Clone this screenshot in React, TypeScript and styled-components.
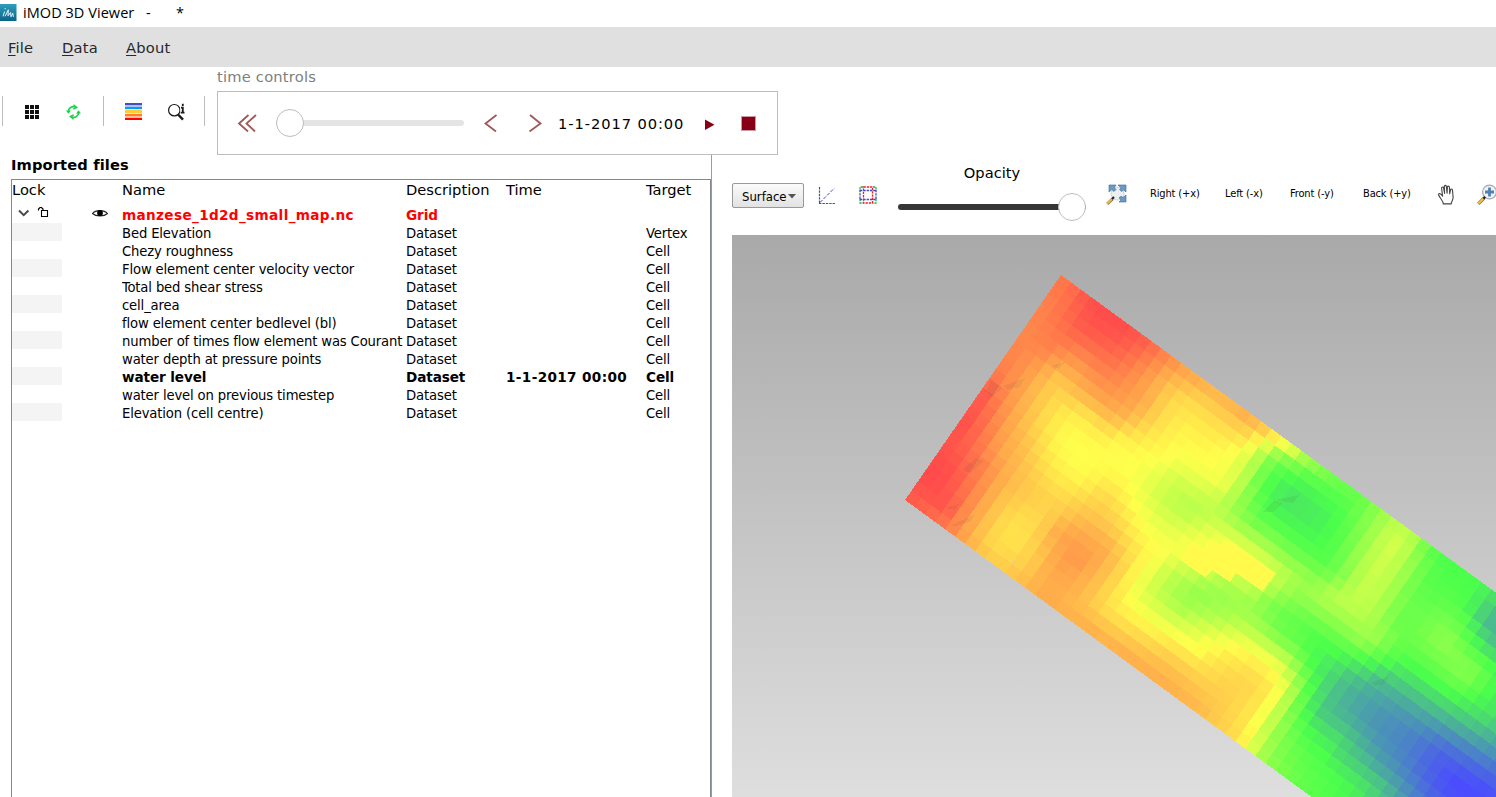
import React from "react";
import styled, { createGlobalStyle } from "styled-components";

const GlobalStyle = createGlobalStyle`
  html, body { margin: 0; padding: 0; background: #fff; }
  body { overflow: hidden; }
  * { box-sizing: border-box; }
`;

const wide = `"DejaVu Sans", Verdana, sans-serif`;
const narrow = `"DejaVu Sans Condensed", "DejaVu Sans", Tahoma, sans-serif`;

const Window = styled.div`
  width: 1496px;
  height: 797px;
  display: flex;
  flex-direction: column;
  overflow: hidden;
  background: #fff;
  color: #000;
  font-family: ${wide};
`;

const TitleBar = styled.header`
  height: 27px;
  flex: none;
  display: flex;
  align-items: flex-start;
  font: 14.5px/26px "Open Sans", "Noto Sans", sans-serif;
  white-space: pre;
`;

const AppIcon = styled.svg`
  margin: 4px 6px 0 0;
  flex: none;
`;

const TitleText = styled.span<{ $w: number }>`
  width: ${(p) => p.$w}px;
  letter-spacing: 0.05px;
`;

const MenuBar = styled.nav`
  height: 40px;
  flex: none;
  display: flex;
  padding-left: 8px;
  background: #e0e0e0;
  color: #26282a;
  font-size: 14.67px;
  letter-spacing: 0.2px;
  line-height: 41px;
`;

const MenuItem = styled.div<{ $w: number }>`
  width: ${(p) => p.$w}px;
  &::first-letter {
    text-decoration: underline;
    text-underline-offset: 2px;
  }
`;

const ToolRow = styled.div`
  height: 88px;
  flex: none;
  display: flex;
`;

const IconBar = styled.div`
  width: 217px;
  height: 30px;
  margin-top: 29px;
  display: flex;
  align-items: center;
  padding-left: 2px;
`;

const Separator = styled.i`
  width: 1px;
  height: 30px;
  background: #bdbdbd;
`;

const IconSlot = styled.span<{ $w: number; $pad: number }>`
  width: ${(p) => p.$w}px;
  padding: 2px 0 0 ${(p) => p.$pad}px;
  display: flex;
  svg { display: block; flex: none; }
`;

const TimeGroup = styled.div`
  width: 561px;
  display: flex;
  flex-direction: column;
  color: #7d7e7f;
  font-size: 14.67px;
`;

const GroupLabel = styled.span`
  height: 24px;
  line-height: 20px;
  letter-spacing: 0.22px;
`;

const TimeBox = styled.div`
  height: 64px;
  border: 1px solid #bdbdbd;
  display: flex;
  align-items: center;
  padding-left: 19px;
  background: #fff;
  svg { display: block; flex: none; }
`;

const Slider = styled.div<{ $w: number }>`
  position: relative;
  width: ${(p) => p.$w}px;
  height: 28px;
  flex: none;
  display: flex;
  align-items: center;
`;

const Track = styled.i<{ $color: string }>`
  width: 100%;
  height: 6px;
  border-radius: 3px;
  background: ${(p) => p.$color};
`;

const Handle = styled.i<{ $side: "left" | "right" }>`
  position: absolute;
  ${(p) => p.$side}: 0;
  top: 0;
  width: 28px;
  height: 28px;
  border: 1px solid #bdbdbd;
  border-radius: 50%;
  background: #fff;
`;

const TimeText = styled.span`
  width: 147px;
  flex: none;
  color: #000;
  font-size: 14.67px;
  letter-spacing: 0.92px;
  white-space: nowrap;
`;

const Split = styled.main`
  flex: 1;
  min-height: 0;
  display: flex;
`;

const FilesPane = styled.section`
  width: 712px;
  border-right: 1px solid #9c9c9c;
  padding-left: 11px;
  display: flex;
  flex-direction: column;
`;

const PaneTitle = styled.h2`
  margin: 0;
  height: 24px;
  font: bold 14.67px/20px ${wide};
  letter-spacing: 0.12px;
`;

const Table = styled.div`
  flex: 1;
  border: 1px solid #828790;
  border-bottom: 0;
`;

const Columns = styled.div`
  display: grid;
  grid-template-columns: 80px 30px 284px 100px 140px 1fr;
  white-space: nowrap;
`;

const HeaderRow = styled(Columns)`
  height: 26px;
  font-size: 14.67px;
  line-height: 20px;
`;

const Row = styled(Columns)<{ $bold?: boolean; $red?: boolean }>`
  height: 18px;
  font-family: ${(p) => (p.$bold ? wide : narrow)};
  font-size: ${(p) => (p.$bold ? "13.6px" : "14.67px")};
  font-weight: ${(p) => (p.$bold ? "bold" : "normal")};
  letter-spacing: ${(p) => (p.$bold ? "-0.1px" : "-0.14px")};
  color: ${(p) => (p.$red ? "#ff0000" : "#000")};
  line-height: ${(p) => (p.$bold && !p.$red ? "20px" : "19px")};
`;

const FileRow = styled(Row)`
  height: 17px;
`;

const Cell = styled.span<{ $spaced?: boolean }>`
  overflow: hidden;
  ${(p) => p.$spaced && "letter-spacing: 0.36px;"}
`;

const LockCell = styled.span<{ $shade?: boolean }>`
  width: 50px;
  height: 18px;
  display: flex;
  background: ${(p) => (p.$shade ? "#f4f4f4" : "transparent")};
`;

const ViewPane = styled.section`
  flex: 1;
  min-width: 0;
  padding-left: 20px;
  display: flex;
  flex-direction: column;
`;

const ViewBar = styled.div`
  height: 80px;
  flex: none;
  display: flex;
  align-items: flex-start;
  padding-top: 28px;
  svg { display: block; flex: none; }
`;

const Dropdown = styled.button`
  width: 72px;
  height: 25px;
  flex: none;
  display: flex;
  align-items: center;
  gap: 1px;
  padding: 1px 0 0 9px;
  border: 1px solid #999;
  border-radius: 2px;
  background: linear-gradient(#fbfbfb, #e2e2e2);
  color: #000;
  font: 13px ${narrow};
`;

const BarSlot = styled.span<{ $w: number; $pad?: number; $top?: number }>`
  width: ${(p) => p.$w}px;
  padding: ${(p) => p.$top ?? 0}px 0 0 ${(p) => p.$pad ?? 0}px;
  flex: none;
`;

const OpacityBlock = styled.div`
  width: 188px;
  height: 60px;
  margin: -21px 20px 0 12px;
  flex: none;
  display: flex;
  flex-direction: column;
  align-items: center;
  font-size: 14.67px;
  line-height: 21px;
  gap: 10px;
`;

const OpacityLabel = styled.span`
  height: 21px;
`;

const ViewLink = styled.span<{ $w: number }>`
  width: ${(p) => p.$w}px;
  flex: none;
  font: 11px/22px ${narrow};
  letter-spacing: -0.14px;
  white-space: nowrap;
`;

const Scene = styled.div`
  flex: 1;
  min-height: 0;
  background: linear-gradient(#a9a9a9, #dedede);
  svg { display: block; }
`;

/* ---------- water level surface ---------- */

// Samples of the surface as x, y, level; 0 red, 1 yellow, 2 green, 3 blue.
const samples: number[] = [
  1061,275,.25, 1073,285,.2, 1087,297,.05, 1107,313,0, 1127,328,.02, 1147,343,.12, 1170,357,.35, 1197,375,.5,
  1027,327,.35, 1047,303,.3, 1007,350,.32, 992,380,.2, 983,393,.05, 963,420,0, 947,443,.05, 930,470,0,
  907,499,.1, 937,483,0, 943,507,.05, 930,515,.2, 950,527,.3, 953,510,.15, 963,517,.4, 973,547,.6,
  980,523,.6, 993,543,.8, 1017,540,.85, 1013,570,.7, 1033,563,.72, 970,467,.2, 957,467,.05, 987,467,.35,
  1000,447,.5, 980,433,.2, 1007,393,.4, 1020,360,.35, 1047,350,.3, 1057,363,.5, 1070,337,.2, 1083,327,.08,
  1067,310,.2, 1110,343,.1, 1113,373,.3, 1120,393,.42, 1100,370,.3, 1080,360,.4, 1057,380,.7, 1080,393,.6,
  1097,403,.55, 1060,400,.8, 1037,423,.75, 1023,400,.55, 1030,377,.5, 1007,427,.5, 1063,427,.95, 1080,447,1,
  1093,460,1, 1057,450,.95, 1110,420,.65, 1087,413,.85, 1127,413,.55, 1133,427,.75, 1120,440,.95, 1147,400,.55,
  1140,373,.4, 1167,380,.6, 1173,400,.8, 1197,403,.8, 1160,427,.85, 1187,427,.92, 1163,460,1, 1140,460,1,
  1190,453,1, 1080,480,.95, 1113,473,.97, 1020,440,.6, 1033,460,.72, 1053,477,.85, 1013,473,.6, 1003,500,.68,
  1030,493,.7, 1057,503,.75, 1007,520,.8, 1037,523,.8, 1060,513,.72, 1060,533,.5, 1077,560,.42, 1087,547,.5,
  1107,550,.55, 1040,560,.65, 1047,570,.55, 1087,513,.68, 1107,493,.8, 1113,520,.75, 1130,537,.85, 1133,507,.97,
  1153,480,1.15, 1163,500,1.3, 1187,507,1.4, 1180,477,1.25, 1157,530,1.1, 1143,517,1.02, 1163,553,1, 1140,553,.9,
  1157,573,1.15, 1173,570,1.35, 1207,383,.55, 1247,417,.55, 1270,430,.68, 1290,447,.95, 1303,455,1.4, 1320,467,1.6,
  1197,407,.8, 1230,427,.8, 1220,450,.98, 1243,447,.95, 1200,463,1, 1190,477,1.15, 1223,483,1.05, 1220,497,1.3,
  1197,513,1.4, 1233,503,1.5, 1247,477,1.4, 1263,457,1.5, 1260,480,1.85, 1280,457,1.75, 1280,477,2, 1273,507,2.05,
  1290,493,2.12, 1320,517,2.08, 1313,530,2.05, 1323,560,1.95, 1323,577,1.75, 1293,550,1.85, 1257,523,1.8, 1240,520,1.6,
  1307,477,1.95, 1333,497,1.95, 1347,513,1.95, 1337,480,1.8, 1367,497,1.8, 1360,520,1.75, 1347,540,1.85, 1340,573,1.75,
  1360,560,1.5, 1370,527,1.6, 1380,547,1.35, 1393,527,1.35, 1410,540,1.35, 1393,547,1.2, 1380,570,1.25, 1370,593,1.3,
  1343,600,1.35, 1363,613,1.4, 1323,593,1.4, 1297,573,1.5, 1270,553,1.45, 1240,537,1.3, 1213,533,1.15, 1193,537,1.1,
  1230,547,1, 1207,560,1, 1247,560,1, 1263,577,1, 1283,577,1.4, 1187,553,1, 1193,573,1.3, 1213,577,1.4,
  1233,583,1.45, 1263,597,1.6, 1200,597,1.6, 1223,600,1.55, 1180,593,1.5, 1190,620,1.3, 1230,613,1.5, 1203,637,1.05,
  1220,627,1.3, 1253,633,1.35, 1233,643,1, 1280,613,1.85, 1280,637,1.75, 1307,620,1.85, 1313,640,2, 1293,647,1.75,
  1280,660,1.2, 1260,660,.95, 1240,680,.78, 1213,657,.9, 1187,647,.95, 1213,687,.75, 1187,680,.65, 1193,703,.6,
  1230,713,.78, 1240,740,.85, 1267,700,.92, 1257,730,1.05, 1280,687,1, 1293,680,1.4, 1283,703,1.35, 1270,733,1.5,
  1267,757,1.6, 1283,770,1.75, 1307,790,1.9, 1297,747,1.85, 1297,710,1.85, 1310,690,2, 1313,667,2.03, 1307,730,2,
  1323,757,1.98, 1323,713,2.3, 1330,670,2.15, 1347,680,2.35, 1327,647,2, 1337,627,1.7, 1360,640,1.6, 1353,653,1.95,
  1377,640,1.55, 1380,613,1.5, 1397,587,1.55, 1413,560,1.6, 1427,547,1.85, 1447,557,2, 1433,580,1.95, 1413,593,1.85,
  1397,620,1.85, 1393,643,1.8, 1377,667,2.1, 1380,680,2.35, 1393,667,2.1, 1413,660,1.95, 1427,633,1.75, 1447,643,1.6,
  1467,673,1.65, 1440,627,1.7, 1433,663,1.85, 1453,690,1.95, 1483,700,2.05, 1480,667,1.8, 1493,683,2, 1463,620,1.9,
  1473,580,2, 1457,593,1.95, 1480,613,2.25, 1493,607,2.3, 1490,627,2.4, 1493,647,2.3, 1473,647,1.95, 1490,597,2.1,
  1413,680,2.15, 1440,700,2.2, 1467,720,2.3, 1493,740,2.45, 1493,717,2.15, 1407,697,2.4, 1440,723,2.5, 1467,743,2.6,
  1493,767,2.75, 1380,700,2.5, 1393,717,2.6, 1420,730,2.65, 1440,750,2.85, 1467,760,2.8, 1453,780,3, 1480,790,3,
  1493,794,2.95, 1360,693,2.45, 1367,713,2.55, 1350,733,2.35, 1380,740,2.6, 1407,753,2.7, 1427,770,2.85, 1380,767,2.5,
  1413,787,2.7, 1337,740,2.15, 1340,757,2.2, 1360,763,2.3, 1353,787,2.05, 1380,787,2.3, 1333,773,2, 1327,793,1.97,
  1037,593,.55, 1073,603,.62, 1100,597,.75, 1123,573,.8, 1127,593,.95, 1137,593,1.1, 1157,583,1.3, 1190,590,1.55,
  1183,613,1.45, 1157,603,1.25, 1137,610,1, 1170,633,1, 1197,653,.97, 1197,640,1.15, 1110,610,.85, 1090,630,.55,
  1123,653,.55, 1157,680,.55, 1170,657,.72, 1130,630,.8, 1190,680,.72, 1197,710,.62, 1057,600,.55,
];

const ORIGIN = [1061, 275];
const U = [0.8075, 0.5898];
const V = [-0.5693, 0.8212];
const CELL_U = 12.4;
const CELL_V = 274 / 24;

// Radial basis interpolation with a linear kernel, solved by Gaussian elimination.
function fitSurface(data: number[]) {
  const n = data.length / 3;
  const dist = (ax: number, ay: number, bx: number, by: number) =>
    Math.sqrt((ax - bx) ** 2 + (ay - by) ** 2 + 9);
  const m: number[][] = [];
  for (let i = 0; i < n; i++) {
    const row: number[] = [];
    for (let j = 0; j < n; j++) {
      row.push(dist(data[i * 3], data[i * 3 + 1], data[j * 3], data[j * 3 + 1]) - (i === j ? 4 : 0));
    }
    row.push(data[i * 3 + 2]);
    m.push(row);
  }
  for (let c = 0; c < n; c++) {
    let best = c;
    for (let r = c + 1; r < n; r++) if (Math.abs(m[r][c]) > Math.abs(m[best][c])) best = r;
    [m[c], m[best]] = [m[best], m[c]];
    for (let r = c + 1; r < n; r++) {
      const f = m[r][c] / m[c][c];
      if (f === 0) continue;
      for (let k = c; k <= n; k++) m[r][k] -= f * m[c][k];
    }
  }
  const w: number[] = new Array(n).fill(0);
  for (let r = n - 1; r >= 0; r--) {
    let s = m[r][n];
    for (let k = r + 1; k < n; k++) s -= m[r][k] * w[k];
    w[r] = s / m[r][r];
  }
  return (x: number, y: number) => {
    let s = 0;
    for (let i = 0; i < n; i++) s += w[i] * dist(x, y, data[i * 3], data[i * 3 + 1]);
    return s;
  };
}

const stops = [
  [255, 75, 75],
  [255, 255, 75],
  [75, 255, 75],
  [75, 75, 255],
];

function levelColor(level: number) {
  const t = Math.max(0, Math.min(2.999, level));
  const k = Math.floor(t);
  const f = t - k;
  const c = stops[k].map((v, i) => Math.round(v + (stops[k + 1][i] - v) * f));
  return `rgb(${c.join(",")})`;
}

function buildCells() {
  const level = fitSurface(samples);
  const at = (i: number, j: number) => [
    ORIGIN[0] + i * CELL_U * U[0] + j * CELL_V * V[0],
    ORIGIN[1] + i * CELL_U * U[1] + j * CELL_V * V[1],
  ];
  const cells: { points: string; fill: string }[] = [];
  for (let j = 0; j < 24; j++) {
    for (let i = 0; i < 58; i++) {
      const [cx, cy] = at(i + 0.5, j + 0.5);
      if (cx > 1506 || cy > 808) continue;
      const corners = [at(i, j), at(i + 1, j), at(i + 1, j + 1), at(i, j + 1)];
      cells.push({
        points: corners.map((p) => `${p[0].toFixed(2)},${p[1].toFixed(2)}`).join(" "),
        fill: levelColor(level(cx, cy)),
      });
    }
  }
  return cells;
}

const cells = buildCells();

const Surface = () => (
  <svg width="764" height="562" viewBox="732 235 764 562" shapeRendering="crispEdges">
    {cells.map((c, i) => (
      <polygon key={i} points={c.points} fill={c.fill} />
    ))}
    <polygon
      points="1192,542 1205,550 1212,539 1222,546 1231,542 1275,573 1262,591 1236,573 1230,582 1212,570 1205,577 1180,560"
      fill="#fffa4b"
    />
    <g fill="#404040" fillOpacity="0.08">
      <path d="M991 380l12 8-11 9-6-5zM1003 386l22-8-5 9-13 3zM1051 366l14-4-6 7zM962 470l14-12 8 3-14 12zM950 526l25-12-5 8-14 4zM945 508l14-4-4 6zM1262 512l12-12 8 3-9 9zM1275 500l24-5-6 8zM1371 683l18-7-5 8-10 2z" />
    </g>
  </svg>
);

/* ---------- icons ---------- */

const LogoIcon = () => (
  <AppIcon width="17" height="17" viewBox="0 0 17 17">
    <defs>
      <linearGradient id="logo" x1="0" y1="0" x2="0" y2="1">
        <stop offset="0" stopColor="#2e9fbd" />
        <stop offset="1" stopColor="#0b6488" />
      </linearGradient>
    </defs>
    <rect width="16.5" height="17" fill="url(#logo)" />
    <path d="M3 12.300L4.600 7.500M5.200 4v1.200M5 12.300l3.300-6.500-.3 6 2.600-3.300.4 4.300 1.800-3.600.6 3.600" fill="none" stroke="#e8f6fa" strokeWidth="1" />
  </AppIcon>
);

const GridIcon = () => (
  <svg width="14" height="14" viewBox="0 0 14 14" fill="#111">
    {[0, 5, 10].map((y) => [0, 5, 10].map((x) => <rect key={`${x}-${y}`} x={x} y={y} width="4" height="4" />))}
  </svg>
);

const RefreshIcon = () => (
  <svg width="15" height="16" viewBox="0 0 15 16" fill="none" stroke="#1bd24b" strokeWidth="1.7">
    <path d="M2.3 7.2C2.6 3.8 6.3 1.2 10.3 3.4M12.7 8.8C12.4 12.2 8.7 14.8 4.7 12.6" />
    <path d="M0 6.5h5L2.4 9.8zM10 9.5h5L12.6 6.2z" fill="#1bd24b" stroke="none" />
    <path d="M7.5 0.8L10.8 3.6 7.2 5.2M7.5 15.2L4.2 12.4 7.8 10.8" strokeWidth="1.3" />
  </svg>
);

const LegendIcon = () => (
  <svg width="18" height="18" viewBox="0 0 18 18" shapeRendering="crispEdges">
    <rect width="17" height="2" y="0" fill="#464bc8" />
    <rect width="17" height="2" y="2" fill="#a9c4f5" />
    <rect width="17" height="2" y="4" fill="#00a2f0" />
    <rect width="17" height="1" y="6" fill="#d5ecf3" />
    <rect width="17" height="3" y="7" fill="#ffca3c" />
    <rect width="17" height="1" y="10" fill="#ffe6c4" />
    <rect width="17" height="2" y="11" fill="#ff7f27" />
    <rect width="17" height="2" y="13" fill="#ffc09c" />
    <rect width="17" height="2" y="15" fill="#ff0000" />
  </svg>
);

const InspectIcon = () => (
  <svg width="18" height="18" viewBox="0 0 18 18" fill="none" stroke="#1a1a1a">
    <circle cx="7.300" cy="7.200" r="5.700" strokeWidth="1.200" />
    <path d="M11 11.500l5 5.200" strokeWidth="2.400" />
    <path d="M15.500 .5v10" stroke="#fff" strokeWidth="4.500" />
    <path d="M15.800 .8v2.200M14 4.700h1.800v4.600M13.700 9.600h3.800" strokeWidth="1.800" />
  </svg>
);

const Chevron = ({ d, w }: { d: string; w: number }) => (
  <svg width={w} height="18" viewBox={`0 0 ${w} 18`} fill="none" stroke="#a05858" strokeWidth="1.8">
    <path d={d} />
  </svg>
);

const AxesIcon = () => (
  <svg width="18" height="19" viewBox="0 0 18 19" fill="none" stroke="#3f48cc">
    <path d="M1.5 1v16.5M1 17.5h17" strokeWidth="1.2" strokeDasharray="2.4 1" />
    <path d="M2 16.5L16.5 2" strokeDasharray="3.5 1.5" />
  </svg>
);

const BoundsIcon = () => (
  <svg width="18" height="18" viewBox="0 0 18 18" fill="none" strokeWidth="1.3" strokeDasharray="2.3 1">
    <path d="M4 1H1v4M14 1h3v4M1 13v4h3M17 13v4h-3" stroke="#22b14c" />
    <path d="M1 4.5h16M1 13.5h16M1 4v10M17 4v10" stroke="#3f48cc" />
    <path d="M4.5 1h9v16h-9z" stroke="#ed1c24" />
  </svg>
);

const FitIcon = () => (
  <svg width="21" height="21" viewBox="0 0 21 21">
    <circle cx="11.500" cy="9.500" r="6.500" fill="#eceeef" stroke="#cfd3d5" />
    <path d="M3 1h7L8.300 3.500 10 5.500 8 7.500 5.700 5.600 3 8zM12 1h8v7l-2.500-2-2 1.500L13.500 5.500l1.600-1.700zM20 11v7h-7l2-2-2-2.200 2-1.500 2 1.300z" fill="#6c9ac8" stroke="#42698f" strokeWidth=".6" />
    <path d="M1.200 19.800l5.500-5" stroke="#8a7650" strokeWidth="3" />
    <path d="M1.200 19.600l4.800-4.400" stroke="#f5c23a" strokeWidth="1.800" />
    <path d="M6 15l2-2" stroke="#222" strokeWidth="2.200" />
  </svg>
);

const HandIcon = () => (
  <svg width="18" height="21" viewBox="0 0 18 21" fill="#fff" stroke="#444" strokeWidth="1.100" strokeLinejoin="round">
    <path d="M5.700 19.900c0-3.200-3.800-6-4.800-9.400-.1-1.300 1.500-1.300 2.400-.3l1.700 2-1-8.200c0-1.300 1.700-1.400 2-.1l1 5.600-.3-7.200c0-1.300 1.800-1.300 2 0l.8 7 .3-6.300c.2-1.200 1.800-1.100 2 .1l.3 6.700.8-4c.4-1.200 2-.9 2 .3l.6 7.200c.1 2.600-1.700 4.200-1.900 6.600z" transform="translate(.6)" />
  </svg>
);

const ZoomInIcon = () => (
  <svg width="21" height="21" viewBox="0 0 21 21">
    <circle cx="12.500" cy="8" r="6.900" fill="#f0f2f4" stroke="#a6a9ab" strokeWidth="1.200" />
    <path d="M12.500 3.500v9M8 8h9" stroke="#4f81b5" strokeWidth="2.800" />
    <path d="M1.200 19.800l6-5.800" stroke="#8a7650" strokeWidth="3.200" />
    <path d="M1.200 19.600l5-4.800" stroke="#f5c23a" strokeWidth="1.900" />
    <path d="M6.500 14.500l1.700-1.700" stroke="#222" strokeWidth="2.400" />
  </svg>
);

const TreeIcons = () => (
  <svg width="50" height="17" viewBox="12 206 50 17" fill="none">
    <path d="M19 210.500l4.700 4.700 4.700-4.700" stroke="#484b4d" strokeWidth="2" />
    <path d="M41.500 210.500h6v6h-6z" stroke="#000" strokeWidth="1.100" />
    <path d="M38.500 210.500v-1.500l1.500-1.500h1.500l1.500 1.500v1.500" stroke="#000" strokeWidth="1.200" />
  </svg>
);

const EyeIcon = () => (
  <svg width="16" height="14" viewBox="0 0 16 14">
    <path d="M.5 7.500C3.500 3.600 12 3.600 15.500 7.500 12 10.700 4 10.700.5 7.500z" fill="#fff" stroke="#222" strokeWidth="1.100" />
    <circle cx="8" cy="7" r="2.900" fill="#000" />
  </svg>
);

const datasets = [
  { name: "Bed Elevation", target: "Vertex" },
  { name: "Chezy roughness", target: "Cell" },
  { name: "Flow element center velocity vector", target: "Cell" },
  { name: "Total bed shear stress", target: "Cell" },
  { name: "cell_area", target: "Cell" },
  { name: "flow element center bedlevel (bl)", target: "Cell" },
  { name: "number of times flow element was Courant", target: "Cell" },
  { name: "water depth at pressure points", target: "Cell" },
  { name: "water level", target: "Cell", time: "1-1-2017 00:00" },
  { name: "water level on previous timestep", target: "Cell" },
  { name: "Elevation (cell centre)", target: "Cell" },
];

export default function App() {
  return (
    <>
      <GlobalStyle />
      <Window>
        <TitleBar>
          <LogoIcon />
          <TitleText $w={123}>iMOD 3D Viewer</TitleText>
          <TitleText $w={30}>-</TitleText>
          <TitleText $w={20}>*</TitleText>
        </TitleBar>
        <MenuBar>
          <MenuItem $w={54}>File</MenuItem>
          <MenuItem $w={64}>Data</MenuItem>
          <MenuItem $w={60}>About</MenuItem>
        </MenuBar>
        <ToolRow>
          <IconBar>
            <Separator />
            <IconSlot $w={41} $pad={22}><GridIcon /></IconSlot>
            <IconSlot $w={59} $pad={22}><RefreshIcon /></IconSlot>
            <Separator />
            <IconSlot $w={41} $pad={21}><LegendIcon /></IconSlot>
            <IconSlot $w={59} $pad={22}><InspectIcon /></IconSlot>
            <Separator />
          </IconBar>
          <TimeGroup>
            <GroupLabel>time controls</GroupLabel>
            <TimeBox>
              <Chevron w={39} d="M11.500 1L2 9.500l9 8M19 1L9.500 9.500l8.500 8" />
              <Slider $w={188}>
                <Track $color="#e4e4e4" />
                <Handle $side="left" />
              </Slider>
              <Chevron w={64} d="M32.500 1L21.500 9.500l10.500 8" />
              <Chevron w={30} d="M2 1l10.500 8.500L1.500 17.500" />
              <TimeText>1-1-2017 00:00</TimeText>
              <svg width="36" height="14" viewBox="0 0 36 14"><path d="M0 3.500l9.500 5.200L0 14z" fill="#880015" /></svg>
              <svg width="16" height="18" viewBox="0 0 16 18"><rect x=".5" y="2.500" width="14" height="14" fill="#880015" stroke="#c99aa2" /></svg>
            </TimeBox>
          </TimeGroup>
        </ToolRow>
        <Split>
          <FilesPane>
            <PaneTitle>Imported files</PaneTitle>
            <Table>
              <HeaderRow>
                <span>Lock</span>
                <span />
                <span>Name</span>
                <span>Description</span>
                <span>Time</span>
                <span>Target</span>
              </HeaderRow>
              <FileRow $bold $red>
                <LockCell><TreeIcons /></LockCell>
                <EyeIcon />
                <Cell $spaced>manzese_1d2d_small_map.nc</Cell>
                <Cell>Grid</Cell>
              </FileRow>
              {datasets.map((d, i) => (
                <Row key={d.name} $bold={!!d.time}>
                  <LockCell $shade={i % 2 === 0} />
                  <span />
                  <Cell>{d.name}</Cell>
                  <Cell>Dataset</Cell>
                  <Cell $spaced>{d.time}</Cell>
                  <Cell>{d.target}</Cell>
                </Row>
              ))}
            </Table>
          </FilesPane>
          <ViewPane>
            <ViewBar>
              <Dropdown>
                Surface
                <svg width="8" height="5" viewBox="0 0 8 5"><path d="M0 0h8L4 4.500z" fill="#555" /></svg>
              </Dropdown>
              <BarSlot $w={42} $pad={14} $top={3}><AxesIcon /></BarSlot>
              <BarSlot $w={40} $pad={13} $top={3}><BoundsIcon /></BarSlot>
              <OpacityBlock>
                <OpacityLabel>Opacity</OpacityLabel>
                <Slider $w={188}>
                  <Track $color="#353637" />
                  <Handle $side="right" />
                </Slider>
              </OpacityBlock>
              <BarSlot $w={44} $top={1}><FitIcon /></BarSlot>
              <ViewLink $w={75}>Right (+x)</ViewLink>
              <ViewLink $w={65}>Left (-x)</ViewLink>
              <ViewLink $w={73}>Front (-y)</ViewLink>
              <ViewLink $w={74}>Back (+y)</ViewLink>
              <BarSlot $w={40} $top={1}><HandIcon /></BarSlot>
              <BarSlot $w={19} $top={1}><ZoomInIcon /></BarSlot>
            </ViewBar>
            <Scene>
              <Surface />
            </Scene>
          </ViewPane>
        </Split>
      </Window>
    </>
  );
}
